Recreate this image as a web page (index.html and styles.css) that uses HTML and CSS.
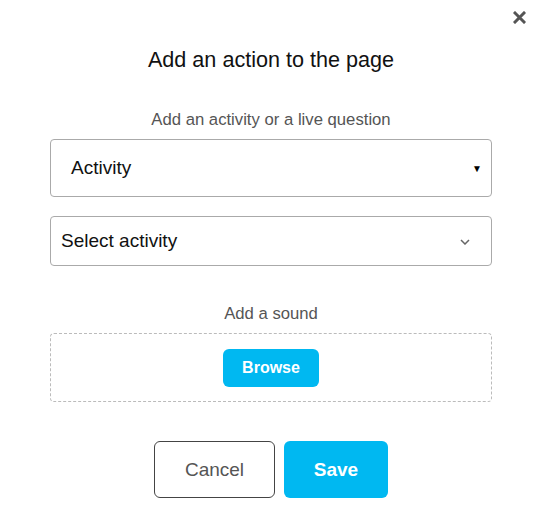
FILE: index.html
```html
<!DOCTYPE html>
<html>
<head>
<meta charset="utf-8">
<link rel="stylesheet" href="styles.css">
</head>
<body>
<div class="modal">
  <button class="close" aria-label="Close">
    <svg width="13" height="13" viewBox="0 0 13 13"><path d="M2 2L11 11M11 2L2 11" stroke="#555" stroke-width="3" stroke-linecap="square"/></svg>
  </button>
  <h1 class="title">Add an action to the page</h1>
  <div class="content">
    <div class="label">Add an activity or a live question</div>
    <div class="select select-native">
      <span>Activity</span>
      <span class="tri">▼</span>
    </div>
    <div class="select select-custom">
      <span>Select activity</span>
      <svg class="chev" width="10" height="6" viewBox="0 0 10 6"><path d="M1 1L5 5L9 1" fill="none" stroke="#666" stroke-width="1.5"/></svg>
    </div>
    <div class="label sound-label">Add a sound</div>
    <div class="dropzone">
      <button class="browse">Browse</button>
    </div>
    <div class="actions">
      <button class="btn cancel">Cancel</button>
      <button class="btn save">Save</button>
    </div>
  </div>
</div>
</body>
</html>
```
FILE: styles.css
```css
* { box-sizing: border-box; }
html, body { margin: 0; padding: 0; background: #fff; }
body { font-family: "Liberation Sans", Arial, sans-serif; color: #000; }
.modal { position: relative; width: 536px; height: 521px; padding-top: 46px; }
.close { position: absolute; top: 11px; right: 10px; background: none; border: 0; padding: 0; width: 13px; height: 13px; line-height: 0; }
.title { margin: 0; font-weight: 400; font-size: 21.6px; line-height: 28px; text-align: center; padding-left: 6px; color: #111; }
.content { padding: 0 44px 0 50px; display: flex; flex-direction: column; }
.label { text-align: center; color: #555; font-size: 16.7px; line-height: 20px; margin-top: 36px; }
.select { border: 1px solid #aaa; border-radius: 4px; display: flex; align-items: center; justify-content: space-between; font-size: 19px; color: #111; }
.select-native { height: 58px; margin-top: 9px; padding: 0 9px 0 20px; }
.tri { font-size: 10px; color: #000; }
.select-custom { height: 50px; margin-top: 19px; padding: 0 21px 0 10px; }
.chev { margin-top: 1px; }
.sound-label { margin-top: 38px; }
.dropzone { margin-top: 9px; height: 69px; border: 1px dashed #bbb; border-radius: 4px; display: flex; align-items: center; justify-content: center; }
.browse { background: #00b8f1; color: #fff; border: 0; border-radius: 6px; font-family: inherit; font-weight: 700; font-size: 16px; width: 96px; height: 38px; padding: 0; }
.actions { display: flex; justify-content: center; gap: 9px; margin-top: 39px; }
.btn { height: 57px; border-radius: 6px; font-family: inherit; font-size: 19px; padding: 0; }
.cancel { width: 121px; background: #fff; border: 1px solid #444; color: #555; }
.save { width: 104px; background: #00b8f1; border: 0; color: #fff; font-weight: 700; }
```
